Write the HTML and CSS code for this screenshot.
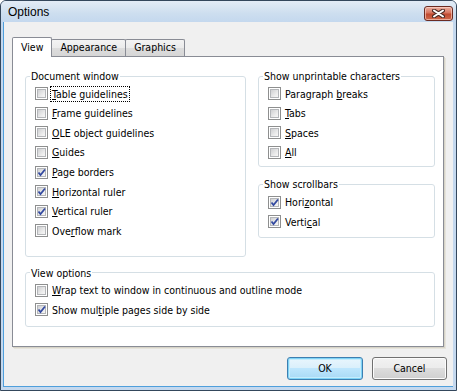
FILE: index.html
```html
<!DOCTYPE html>
<html lang="en">
<head>
  <meta charset="UTF-8" />
  <title>Options</title>
  <link rel="stylesheet" href="styles.css">
</head>
<body>
  <div class="window">
    <div class="titlebar">
      <span class="title">Options</span>
      <span class="close-btn">
        <svg width="13" height="9" viewBox="0 0 13 9">
          <path d="M2 1.5 L11 7.5 M11 1.5 L2 7.5" stroke="#4a2a24" stroke-width="4" stroke-linecap="round" />
          <path d="M2 1.5 L11 7.5 M11 1.5 L2 7.5" stroke="#fff" stroke-width="2" stroke-linecap="round" />
        </svg>
      </span>
    </div>

    <div class="client">
      <div class="tabs">
        <span class="tab active">View</span>
        <span class="tab">Appearance</span>
        <span class="tab">Graphics</span>
      </div>

      <div class="panel">
        <div class="columns">
          <fieldset class="group doc-group">
            <legend>Document window</legend>
            <label class="opt"><span class="cb"></span><span class="focus"><u>T</u>able guidelines</span></label>
            <label class="opt"><span class="cb"></span><span><u>F</u>rame guidelines</span></label>
            <label class="opt"><span class="cb"></span><span><u>O</u>LE object guidelines</span></label>
            <label class="opt"><span class="cb"></span><span><u>G</u>uides</span></label>
            <label class="opt"><span class="cb checked"></span><span><u>P</u>age borders</span></label>
            <label class="opt"><span class="cb checked"></span><span><u>H</u>orizontal ruler</span></label>
            <label class="opt"><span class="cb checked"></span><span><u>V</u>ertical ruler</span></label>
            <label class="opt"><span class="cb"></span><span>Ove<u>r</u>flow mark</span></label>
          </fieldset>

          <div class="side">
            <fieldset class="group unprint-group">
              <legend>Show unprintable characters</legend>
              <label class="opt"><span class="cb"></span><span>Paragraph <u>b</u>reaks</span></label>
              <label class="opt"><span class="cb"></span><span><u>T</u>abs</span></label>
              <label class="opt"><span class="cb"></span><span><u>S</u>paces</span></label>
              <label class="opt"><span class="cb"></span><span><u>A</u>ll</span></label>
            </fieldset>

            <fieldset class="group scroll-group">
              <legend>Show scrollbars</legend>
              <label class="opt"><span class="cb checked"></span><span>Hori<u>z</u>ontal</span></label>
              <label class="opt"><span class="cb checked"></span><span>Verti<u>c</u>al</span></label>
            </fieldset>
          </div>
        </div>

        <fieldset class="group view-group">
          <legend>View options</legend>
          <label class="opt"><span class="cb"></span><span><u>W</u>rap text to window in continuous and outline mode</span></label>
          <label class="opt"><span class="cb checked"></span><span>Show mul<u>t</u>iple pages side by side</span></label>
        </fieldset>
      </div>

      <div class="buttons">
        <button class="btn default">OK</button>
        <button class="btn">Cancel</button>
      </div>
    </div>
  </div>
</body>
</html>
```

FILE: styles.css
```css
* {
  box-sizing: border-box;
}

body {
  margin: 0;
  font-family: 'DejaVu Sans Condensed', 'DejaVu Sans', sans-serif;
  font-stretch: condensed;
  font-size: 10.5px;
  color: #000;
  background: #fff;
}

.window {
  width: 457px;
  height: 391px;
  border: 1px solid #34475c;
  border-radius: 6px 6px 0 0;
  background: #c4d8ee;
  display: flex;
  flex-direction: column;
  overflow: hidden;
}

.titlebar {
  height: 21px;
  display: flex;
  align-items: center;
  justify-content: space-between;
  padding: 0 3px 0 7px;
  background: linear-gradient(#e3ecf6, #cddeef 60%, #c4d8ee);
}

.title {
  font-family: 'Liberation Sans', sans-serif;
  font-stretch: normal;
  font-size: 12px;
  margin-top: 1px;
}

.close-btn {
  width: 29px;
  height: 15px;
  margin-top: 4px;
  border: 1px solid #6b2b22;
  border-radius: 3px;
  background: linear-gradient(#eab0a2, #d7745e 45%, #c04a30 55%, #cf6a4c);
  box-shadow: inset 0 0 0 1px rgba(255, 220, 210, 0.6);
  display: flex;
  align-items: center;
  justify-content: center;
}

.client {
  flex: 1;
  margin: 0 3px 3px 2px;
  padding: 15px 6px 0 8px;
  background: #f0f0f0;
  border-left: 1px solid #4f9fdc;
  border-bottom: 1px solid #4f9fdc;
}

.tabs {
  display: flex;
  align-items: flex-end;
  height: 19px;
}

.tab {
  height: 17px;
  padding: 0 8px;
  margin-left: -1px;
  border: 1px solid #898c95;
  border-bottom: none;
  border-radius: 2px 2px 0 0;
  background: linear-gradient(#f3f3f3, #ebebeb 50%, #dddddd 50%, #d6d6d6);
  line-height: 15px;
}

.tab:first-child {
  margin-left: 0;
}

.tab.active {
  position: relative;
  z-index: 1;
  height: 20px;
  margin-bottom: -1px;
  background: #fff;
  padding: 2px 8px 0;
}

.tab.active + .tab {
  margin-left: -1px;
}

.panel {
  width: 432px;
  border: 1px solid #898c95;
  background: #fff;
  box-shadow: 1px 1px 0 #d7d4c8, 2px 2px 0 #e6e4dc;
  padding: 12px 8px 19px 12px;
}

.columns {
  display: flex;
  gap: 12px;
  align-items: flex-start;
}

.group {
  margin: 0;
  border: 1px solid #d5dfe5;
  border-radius: 3px;
  padding: 1px 8px 4px 9px;
  min-width: 0;
}

.group legend {
  padding: 0 1px;
  margin-left: -5px;
  line-height: 14px;
}

.doc-group {
  width: 221px;
  padding-bottom: 15px;
}

.side {
  flex: 1;
}

.scroll-group {
  margin-top: 10px;
  padding-bottom: 6px;
}

.view-group {
  margin-top: 9px;
  padding-bottom: 6px;
}

.opt {
  display: flex;
  align-items: center;
  gap: 4px;
  height: 19.57px;
  white-space: nowrap;
}

.focus {
  outline: 1px dotted #000;
  outline-offset: 1px;
}

.cb {
  flex: none;
  position: relative;
  width: 13px;
  height: 13px;
  border: 1px solid #8e8f8f;
  background: #fff;
}

.cb::before {
  content: '';
  position: absolute;
  inset: 1px;
  border: 1px solid #b4b6b9;
  background: linear-gradient(135deg, #cfd0d2, #eeeeee 70%, #f6f6f6);
}

.cb.checked::after {
  content: '';
  position: absolute;
  inset: 0;
  background: url("data:image/svg+xml,%3Csvg xmlns='http://www.w3.org/2000/svg' width='11' height='11'%3E%3Cpath d='M2.5 5.5 L4.5 8 L9 2.5' fill='none' stroke='%23344aa0' stroke-width='1.8'/%3E%3C/svg%3E") no-repeat center;
}

.buttons {
  display: flex;
  justify-content: flex-end;
  gap: 9px;
  margin-top: 10px;
}

.btn {
  width: 75px;
  height: 23px;
  font: inherit;
  border: 1px solid #707070;
  border-radius: 3px;
  background: linear-gradient(#f2f2f2, #ebebeb 50%, #dddddd 50%, #cfcfcf);
  box-shadow: inset 0 0 0 1px #fcfcfc;
  padding: 0;
}

.btn.default {
  width: 76px;
  border-color: #3c7fb1;
  background: linear-gradient(#e9f6fd, #d9effb 50%, #bee6fd 50%, #a7d9f5);
  box-shadow: inset 0 0 0 1px #7fd3f6, inset 0 0 0 2px #c5ecfc;
}
```
